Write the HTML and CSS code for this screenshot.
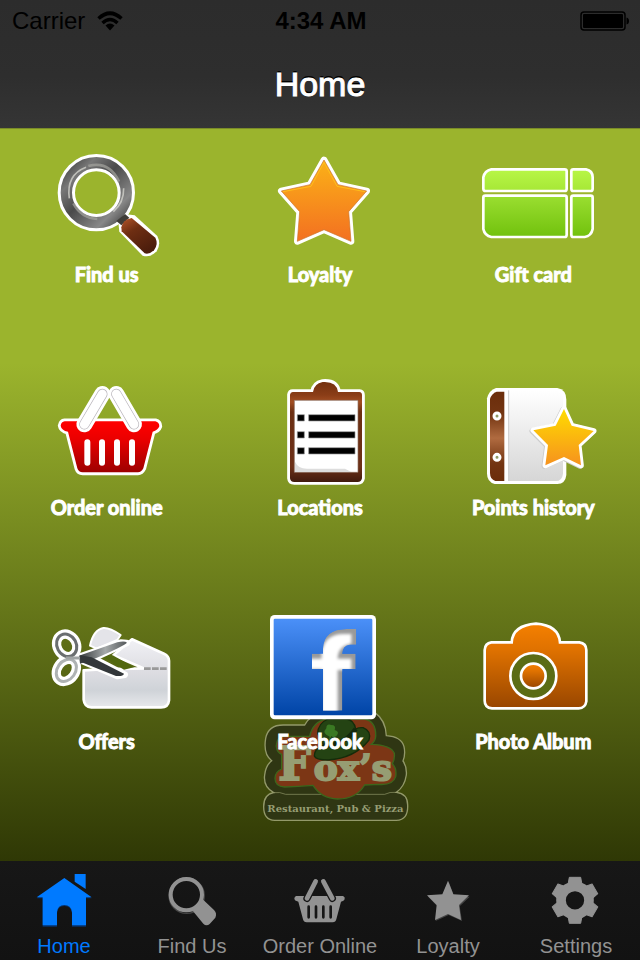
FILE: index.html
```
<!DOCTYPE html>
<html lang="en">
<head>
<meta charset="UTF-8">
<meta name="viewport" content="width=device-width, initial-scale=1.0">
<title>Home</title>
<link rel="stylesheet" href="styles.css">
</head>
<body>
<header class="header">
    <div class="status">
        <div class="status-left">
            <span>Carrier</span>
            <svg class="wifi" viewBox="0 0 26 20" aria-hidden="true">
                <path d="M1.5 7.5Q13-3 24.500 7.500" fill="none" stroke="#000" stroke-width="3.600"/>
                <path d="M5.500 12Q13 5 20.500 12" fill="none" stroke="#000" stroke-width="3.400"/>
                <path d="M8.500 14.500Q13 10.500 17.500 14.500L13 19.500Z"/>
            </svg>
        </div>
        <div class="status-time">4:34 AM</div>
        <div class="status-right">
            <svg class="battery" viewBox="0 0 50 20" aria-hidden="true">
                <rect x="1" y="1" width="44" height="18" rx="3" fill="none" stroke="#000" stroke-width="1.500"/>
                <rect x="3" y="3" width="40" height="14" rx="1"/>
                <path d="M46.500 6.500Q49 7 49 10T46.500 13.500Z"/>
            </svg>
        </div>
    </div>
    <h1 class="title">Home</h1>
</header>

<main class="main">
    <svg class="logo" viewBox="40 318 438 333" aria-hidden="true">
        <path d="M72 563Q40 545 45 510Q48 482 66 467Q40 448 48 400Q56 358 105 360L165 360Q180 330 220 322H375Q408 345 410 392Q455 395 463 425Q468 448 460 468Q472 485 470 510Q465 545 440 562Q474 566 474 600Q476 645 440 646H75Q42 645 42 605Q42 568 72 563Z" fill="#2f3613" stroke="#93996a" stroke-width="4"/>
        <path d="M72 563Q90 560 108 568H405Q420 560 440 562" fill="none" stroke="#93996a" stroke-width="2"/>
        <path d="M80 425Q78 394 110 394H180Q190 350 230 342H345Q380 350 378 395Q376 410 365 418Q425 420 434 445Q436 462 428 476Q442 490 438 515Q430 542 385 538L345 540Q320 582 264 582Q215 580 190 541Q145 545 105 546Q76 545 76 520Q76 500 96 492V448Q82 442 80 425Z" fill="#7c3615" stroke="#3c661b" stroke-width="4"/>
        <text class="logo-name" x="86" y="525" font-size="138">F</text>
        <text class="logo-name" x="192" y="525" font-size="108">ox’s</text>
        <path d="M194 453Q198 465 235 465Q315 460 358 405Q366 378 340 368Q325 367 318 372Q313 345 290 342H235Q205 355 204 385Q210 405 222 420Q194 430 194 453Z" fill="#244313" stroke="#142c0a" stroke-width="4"/>
        <path d="M222 420Q280 425 318 372" fill="none" stroke="#14280c" stroke-width="14"/>
        <path d="M240 395Q215 385 230 370Q230 355 245 360Q260 360 255 375Q272 380 260 393Q250 400 245 393L238 408Z" fill="#3a7923"/>
        <text class="logo-line" x="53" y="620" font-size="30">Restaurant, Pub &amp; Pizza</text>
    </svg>

    <nav class="grid">
        <button type="button" class="tile">
            <svg class="tile-icon" viewBox="21 15 420 354" aria-hidden="true">
                <defs>
                    <linearGradient id="ring" x1="0" y1="0" x2="1" y2="1">
                        <stop offset="0" stop-color="#444"/><stop offset=".2" stop-color="#777"/><stop offset=".45" stop-color="#4a4a4a"/><stop offset=".8" stop-color="#888"/><stop offset="1" stop-color="#444"/>
                    </linearGradient>
                    <linearGradient id="handle" x1="0" y1="0" x2=".6" y2="1">
                        <stop offset="0" stop-color="#b4552a"/><stop offset=".4" stop-color="#6e2e12"/><stop offset="1" stop-color="#4c1d0c"/>
                    </linearGradient>
                </defs>
                <path d="M264 236L290 223L314 226L382 288Q394 312 380 334Q362 354 338 347L268 275Z" fill="#fff"/>
                <circle cx="199" cy="158" r="90" fill="none" stroke="#fff" stroke-width="52"/>
                <circle cx="199" cy="158" r="90" fill="none" stroke="url(#ring)" stroke-width="34"/>
                <path d="M118 175Q108 105 168 82M250 215Q282 188 281 145" fill="none" stroke="#d2d2cc" stroke-width="5" opacity=".8"/>
                <path d="M175 78Q238 62 267 125M130 190Q154 234 202 237" fill="none" stroke="#a5a5a0" stroke-width="8" opacity=".7"/>
                <path d="M259 243L285 222L298 233L274 256Z" fill="#3f3d38"/>
                <path d="M274 262Q278 240 305 234L376 293Q386 312 372 331Q358 344 344 340L275 274Z" fill="url(#handle)"/>
            </svg>
            <span>Find us</span>
        </button>
        <button type="button" class="tile">
            <svg class="tile-icon" viewBox="0 15 420 354" aria-hidden="true">
                <defs>
                    <linearGradient id="orange" x1="0" y1="0" x2="0" y2="1">
                        <stop offset="0" stop-color="#fbb117"/><stop offset="1" stop-color="#f37021"/>
                    </linearGradient>
                </defs>
                <path d="M222 60L264 134L350 153L296 215L303 304L222 269L142 304L149 215L94 153L180 134Z" fill="#fff" stroke="#fff" stroke-width="20" stroke-linejoin="round"/>
                <path d="M222 60L264 134L350 153L296 215L303 304L222 269L142 304L149 215L94 153L180 134Z" fill="url(#orange)" stroke="#c8742a" stroke-width="2"/>
                <path d="M99 155L183 139L222 67L261 139L345 155" fill="none" stroke="#ffbe1c" stroke-width="3"/>
            </svg>
            <span>Loyalty</span>
        </button>
        <button type="button" class="tile">
            <svg class="tile-icon" viewBox="9 15 420 354" aria-hidden="true">
                <defs>
                    <linearGradient id="gift" gradientUnits="userSpaceOnUse" x1="0" y1="85" x2="0" y2="295">
                        <stop offset="0" stop-color="#b9f748"/><stop offset=".33" stop-color="#a6e736"/><stop offset=".4" stop-color="#9ade30"/><stop offset="1" stop-color="#70c00c"/>
                    </linearGradient>
                </defs>
                <g fill="url(#gift)" stroke="#fff" stroke-width="8" stroke-linejoin="round">
                    <path d="M94 88H314Q320 88 320 94V146Q320 153 314 153H77Q70 153 70 146V112Q74 92 94 88Z"/>
                    <path d="M340 88H378Q398 92 398 112V146Q398 153 392 153H340Q334 153 334 146V94Q334 88 340 88Z"/>
                    <path d="M76 167H314Q320 167 320 173V284Q320 291 314 291H94Q74 287 70 267V173Q70 167 76 167Z"/>
                    <path d="M340 167H392Q398 167 398 173V267Q394 288 374 291H340Q334 291 334 284V173Q334 167 340 167Z"/>
                </g>
            </svg>
            <span>Gift card</span>
        </button>
        <button type="button" class="tile">
            <svg class="tile-icon" viewBox="21 27 420 354" aria-hidden="true">
                <defs>
                    <linearGradient id="red" x1="0" y1="0" x2="0" y2="1">
                        <stop offset="0" stop-color="#ff0000"/><stop offset=".35" stop-color="#ea0000"/><stop offset="1" stop-color="#9d0000"/>
                    </linearGradient>
                </defs>
                <path d="M104 157H376Q388 160 388 172Q384 184 368 188L340 298Q334 310 324 310H158Q146 310 142 298L114 188Q94 184 92 170Q94 158 104 157Z" fill="url(#red)" stroke="#fff" stroke-width="17" stroke-linejoin="round"/>
                <path d="M104 157H376Q388 160 388 172Q384 184 368 188L340 298Q334 310 324 310H158Q146 310 142 298L114 188Q94 184 92 170Q94 158 104 157Z" fill="url(#red)"/>
                <g fill="none" stroke-linecap="round">
                    <path d="M163 166L217 75M259 75L312 166" stroke="#fff" stroke-width="48"/>
                    <path d="M163 166L217 75M259 75L312 166" stroke="#b8b4ba" stroke-width="31"/>
                    <path d="M163 166L217 75M259 75L312 166" stroke="#fff" stroke-width="27"/>
                    <path d="M172 220V281M216 220V281M261 220V281M306 220V281" stroke="#fff" stroke-width="18"/>
                </g>
            </svg>
            <span>Order online</span>
        </button>
        <button type="button" class="tile">
            <svg class="tile-icon" viewBox="0 27 420 354" aria-hidden="true">
                <defs>
                    <linearGradient id="board" x1="0" y1="0" x2="0" y2="1">
                        <stop offset="0" stop-color="#74300f"/><stop offset=".13" stop-color="#8a3d17"/><stop offset=".2" stop-color="#a24e22"/><stop offset=".3" stop-color="#6c2f12"/><stop offset=".85" stop-color="#6c3018"/><stop offset="1" stop-color="#401a0e"/>
                    </linearGradient>
                </defs>
                <path d="M128 69H189Q192 44 218 39Q260 36 264 69H328Q336 70 336 78V328Q334 339 323 339H133Q121 339 120 328V77Q121 69 128 69Z" fill="#fff" stroke="#fff" stroke-width="17" stroke-linejoin="round"/>
                <path d="M128 69H189Q192 44 218 39Q260 36 264 69H328Q336 70 336 78V328Q334 339 323 339H133Q121 339 120 328V77Q121 69 128 69Z" fill="url(#board)"/>
                <path d="M133 94H324V310H133Z" fill="#fff" stroke="#8b6e5f" stroke-width="2"/>
                <path d="M135 278Q145 301 175 299H285L304 309H135Z" fill="#ddd"/>
                <g stroke="#999" stroke-width="2">
                    <path d="M142 137H163V156H142ZM176 137H315V156H176ZM142 188H163V207H142ZM176 188H315V207H176ZM142 236H163V255H142ZM176 236H315V255H176Z"/>
                </g>
            </svg>
            <span>Locations</span>
        </button>
        <button type="button" class="tile">
            <svg class="tile-icon" viewBox="9 27 420 354" aria-hidden="true">
                <defs>
                    <linearGradient id="spine" x1="0" y1="0" x2="0" y2="1">
                        <stop offset="0" stop-color="#6b2d0b"/><stop offset=".25" stop-color="#733512"/><stop offset=".52" stop-color="#b06b40"/><stop offset=".8" stop-color="#733512"/><stop offset="1" stop-color="#6b2d0b"/>
                    </linearGradient>
                    <linearGradient id="paper" x1="0" y1="0" x2="0" y2="1">
                        <stop offset="0" stop-color="#fff"/><stop offset="1" stop-color="#d6d6d6"/>
                    </linearGradient>
                    <linearGradient id="gold" x1="0" y1="0" x2="0" y2="1">
                        <stop offset="0" stop-color="#ffdc00"/><stop offset="1" stop-color="#f6921e"/>
                    </linearGradient>
                </defs>
                <path d="M108 57H292Q319 62 319 92V318Q316 345 292 345H104Q81 338 81 314V88Q87 64 108 57Z" fill="#fff"/>
                <path d="M110 68H133V336H106Q90 331 90 312V90Q95 73 110 68Z" fill="url(#spine)"/>
                <path d="M146 64H286Q309 70 309 94V314Q306 336 288 336H146Z" fill="url(#paper)"/>
                <path d="M146 64V336" stroke="#ccc" stroke-width="3"/>
                <circle cx="111" cy="141" r="9" fill="#8f9b64" stroke="#fff" stroke-width="9"/>
                <circle cx="111" cy="265" r="9" fill="#8f9b64" stroke="#fff" stroke-width="9"/>
                <path d="M312 120L335 168L401 186L356 228L363 289L312 264L256 289L264 228L220 184L287 170Z" transform="translate(-3 2)" fill="#ccc" stroke="#ccc" stroke-width="17" stroke-linejoin="round"/>
                <path d="M312 120L335 170L401 186L356 228L363 289L312 264L256 289L264 228L220 184L287 170Z" fill="#fff" stroke="#fff" stroke-width="17" stroke-linejoin="round"/>
                <path d="M312 120L335 170L401 186L356 228L363 289L312 264L256 289L264 228L220 184L287 170Z" fill="url(#gold)"/>
            </svg>
            <span>Points history</span>
        </button>
        <button type="button" class="tile">
            <svg class="tile-icon" viewBox="21 24 420 354" aria-hidden="true">
                <defs>
                    <linearGradient id="coupon" x1="0" y1="0" x2="0" y2="1">
                        <stop offset="0" stop-color="#f1f1f5"/><stop offset=".5" stop-color="#dcdce1"/><stop offset=".75" stop-color="#cfd3d8"/><stop offset="1" stop-color="#e8e9ec"/>
                    </linearGradient>
                    <linearGradient id="blade" x1="0" y1="0" x2="1" y2="0">
                        <stop offset="0" stop-color="#33373a"/><stop offset=".55" stop-color="#a5a9aa"/><stop offset="1" stop-color="#55595b"/>
                    </linearGradient>
                </defs>
                <path d="M180 125Q190 78 220 72Q238 70 272 93L262 108L200 134Z" fill="#e4e4e9" stroke="#fff" stroke-width="6" stroke-linejoin="round"/>
                <path d="M306 106L402 149Q417 156 417 170V289Q415 310 393 310H184Q163 309 161 287V199L210 196L340 193L250 154Z" fill="url(#coupon)" stroke="#fff" stroke-width="8" stroke-linejoin="round"/>
                <path d="M216 156L248 154L312 190L282 197Z" fill="#52680f"/>
                <path d="M342 194H411" stroke="#999" stroke-width="8" stroke-dasharray="20 4"/>
                <g fill="none" stroke="#fff" stroke-linejoin="round" stroke-linecap="round">
                    <path d="M147 159L272 116L290 117L190 163L284 212L262 216L155 170Z" stroke-width="20"/>
                    <ellipse cx="110" cy="124" rx="29" ry="35" transform="rotate(-28 110 124)" stroke-width="28"/>
                    <ellipse cx="109" cy="199" rx="27" ry="36" transform="rotate(35 109 199)" stroke-width="28"/>
                    <path d="M110 162H150" stroke-width="22"/>
                </g>
                <path d="M147 155L262 115Q284 109 291 116Q286 124 190 166L150 179Z" fill="url(#blade)"/>
                <path d="M150 154L185 160L282 209Q280 218 258 216L155 175Z" fill="#33373a"/>
                <g fill="none" stroke-width="9">
                    <ellipse cx="110" cy="124" rx="29" ry="35" transform="rotate(-28 110 124)" stroke="#6a6e70"/>
                    <ellipse cx="109" cy="199" rx="27" ry="36" transform="rotate(35 109 199)" stroke="#aeb2b3"/>
                    <path d="M108 162H150" stroke="#a0a4a5"/>
                </g>
            </svg>
            <span>Offers</span>
        </button>
        <button type="button" class="tile">
            <svg class="tile-icon" viewBox="0 24 420 354" aria-hidden="true">
                <defs>
                    <linearGradient id="blue" x1="0" y1="0" x2="0" y2="1">
                        <stop offset="0" stop-color="#4b90f8"/><stop offset="1" stop-color="#0044a6"/>
                    </linearGradient>
                    <filter id="soft"><feGaussianBlur stdDeviation="4"/></filter>
                    <clipPath id="letter"><path id="f" d="M219 320V195H186V149H219V135Q220 76 290 75H319V122H300Q278 124 277 149H317V195H277V320Z"/></clipPath>
                </defs>
                <rect x="60" y="33" width="318" height="313" rx="14" fill="#fff"/>
                <rect x="71" y="44" width="296" height="290" rx="4" fill="url(#blue)"/>
                <!-- inner shadow: white shape shifted inside the grey one -->
                <g clip-path="url(#letter)">
                    <use href="#f" fill="#999"/>
                    <path d="M215 330V196H176V164H215V145Q223 91 280 90H304V119Q264 125 263 164H304V198H263V330Z" fill="#fff" filter="url(#soft)"/>
                </g>
            </svg>
            <span>Facebook</span>
        </button>
        <button type="button" class="tile">
            <svg class="tile-icon" viewBox="9 24 420 354" aria-hidden="true">
                <defs>
                    <linearGradient id="camera" x1="0" y1="0" x2="0" y2="1">
                        <stop offset="0" stop-color="#f58000"/><stop offset=".3" stop-color="#e07200"/><stop offset="1" stop-color="#984600"/>
                    </linearGradient>
                </defs>
                <path d="M94 115H155Q158 64 228 59Q296 64 300 115H358Q379 118 379 138V292Q376 312 356 313H96Q74 311 74 290V138Q75 118 94 115Z" fill="url(#camera)" stroke="#fff" stroke-width="8"/>
                <circle cx="220" cy="216" r="69" fill="#5b6c15" stroke="#fff" stroke-width="8"/>
                <circle cx="220" cy="216" r="37" fill="url(#camera)" stroke="#fff" stroke-width="8"/>
            </svg>
            <span>Photo Album</span>
        </button>
    </nav>
</main>

<nav class="tabs">
    <a class="tab active" href="#home">
        <svg class="tab-icon" viewBox="96 69 192 168" aria-hidden="true">
            <path d="M110 145L193 87L275 145H258V230H216V190Q213 168 193 168T171 190V230H128V145Z" fill="#06326b"/>
            <path d="M110 142L193 84L275 142H258V226H216V186Q213 165 193 165T171 186V226H128V142ZM224 72H257V117L224 95Z"/>
        </svg>
        <span>Home</span>
    </a>
    <a class="tab" href="#find">
        <svg class="tab-icon" viewBox="480 69 192 168" aria-hidden="true">
            <circle cx="560" cy="137" r="53" fill="none" stroke="#454545" stroke-width="4"/>
            <circle cx="559" cy="134" r="47" fill="none" stroke="currentColor" stroke-width="12"/>
            <path d="M578 182Q602 170 608 148L642 180Q652 190 646 203L629 222Q619 230 610 221Z"/>
        </svg>
        <span>Find Us</span>
    </a>
    <a class="tab" href="#order">
        <svg class="tab-icon" viewBox="864 69 192 168" aria-hidden="true">
            <path d="M889 138H1029Q1036 141 1034 148Q1032 154 1023 155L1009 208Q1007 217 998 217H920Q911 217 909 208L895 155Q883 153 883 145Q884 139 889 138Z"/>
            <g fill="none" stroke-linecap="round">
                <path d="M921 145L947 94M997 145L970 94" stroke="#161616" stroke-width="22"/>
                <path d="M921 145L947 94M997 145L970 94" stroke="currentColor" stroke-width="14"/>
                <path d="M926 170V202M948 170V202M970 170V202M992 170V202" stroke="#161616" stroke-width="8"/>
            </g>
        </svg>
        <span>Order Online</span>
    </a>
    <a class="tab" href="#loyalty">
        <svg class="tab-icon" viewBox="288 69 192 168" aria-hidden="true">
            <path d="M386 95L402 137L449 140L419 169L426 213L386 195L347 213L352 169L323 139L368 137Z" fill="#454545"/>
            <path d="M384 92L400 133L447 136L417 165L423 210L384 192L345 210L350 165L321 136L367 133Z"/>
        </svg>
        <span>Loyalty</span>
    </a>
    <a class="tab" href="#settings">
        <svg class="tab-icon" viewBox="672 69 192 168" aria-hidden="true">
            <circle cx="765" cy="151" r="42" fill="none" stroke="currentColor" stroke-width="29"/>
            <g stroke="currentColor" stroke-width="3" stroke-linejoin="round">
                <path id="tooth" d="M748 82H782L786 104H744Z"/>
                <use href="#tooth" transform="rotate(60 765 151)"/>
                <use href="#tooth" transform="rotate(120 765 151)"/>
                <use href="#tooth" transform="rotate(180 765 151)"/>
                <use href="#tooth" transform="rotate(240 765 151)"/>
                <use href="#tooth" transform="rotate(300 765 151)"/>
            </g>
        </svg>
        <span>Settings</span>
    </a>
</nav>
</body>
</html>
```
FILE: styles.css
```
* {
    box-sizing: border-box;
}
body {
    margin: 0;
    min-height: 100vh;
    display: flex;
    flex-direction: column;
    font-family: "Liberation Sans", Arial, sans-serif;
    background: #141414;
}
svg {
    display: block;
}

/* status bar + title */
.header {
    height: 128px;
    background: linear-gradient(#2c2c2c, #2e2e2e 60%, #353535);
}
.status {
    display: grid;
    grid-template-columns: 1fr auto 1fr;
    align-items: center;
    height: 41px;
    padding: 0 10px 0 12px;
    font-size: 24px;
    line-height: 41px;
}
.status-left {
    display: flex;
    align-items: center;
    gap: 12px;
}
.status-time {
    font-weight: bold;
}
.status-right {
    display: flex;
    justify-content: flex-end;
}
.wifi {
    width: 26px;
    height: 20px;
}
.battery {
    width: 50px;
    height: 20px;
}
.title {
    margin: 0;
    font-size: 34px;
    line-height: 86px;
    font-weight: normal;
    text-align: center;
    color: #fff;
    -webkit-text-stroke: 1px #fff;
    text-shadow: 0 -2px 0 #000;
}

/* icon grid */
.main {
    flex: 1;
    display: flex;
    position: relative;
    border-top: 1px solid #7b8c28;
    background: linear-gradient(#9bb42d, #9bb42d 32%, #2f3805);
}
.logo {
    position: absolute;
    left: 50%;
    bottom: 39px;
    width: 146px;
    height: 111px;
    margin-left: -57px;
}
.logo-name,
.logo-line {
    font-family: "DejaVu Serif", serif;
    font-weight: bold;
    fill: #969d73;
}
.logo-name {
    stroke: #969d73;
    stroke-width: 6px;
}
.grid {
    position: relative;
    flex: 1;
    display: grid;
    grid-template-columns: repeat(3, 1fr);
    grid-auto-rows: 1fr;
    padding: 16px 0;
}
.tile {
    display: flex;
    flex-direction: column;
    align-items: center;
    padding: 0;
    border: none;
    background: none;
    font-family: Lato, sans-serif;
    font-size: 20px;
    font-weight: 700;
    line-height: 22px;
    color: #fff;
    -webkit-text-stroke: 1px #fff;
    cursor: pointer;
}
.tile-icon {
    width: 140px;
    height: 118px;
}

/* bottom tabs */
.tabs {
    display: grid;
    grid-template-columns: repeat(5, 1fr);
    height: 99px;
    padding-top: 12px;
    background: linear-gradient(#171717, #121212);
}
.tab {
    display: flex;
    flex-direction: column;
    align-items: center;
    font-size: 20px;
    line-height: 34px;
    color: #929292;
    text-decoration: none;
    white-space: nowrap;
}
.tab.active {
    color: #007aff;
}
.tab-icon {
    width: 64px;
    height: 56px;
    fill: currentColor;
}
```
